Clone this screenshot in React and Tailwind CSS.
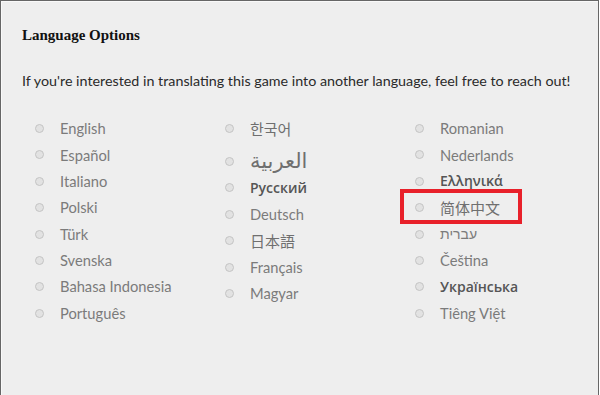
import React from 'react';

const columns = [
  [
    { label: 'English' },
    { label: 'Español' },
    { label: 'Italiano' },
    { label: 'Polski' },
    { label: 'Türk' },
    { label: 'Svenska' },
    { label: 'Bahasa Indonesia' },
    { label: 'Português' },
  ],
  [
    { label: '한국어', kind: 'cjk' },
    { label: 'العربية', kind: 'arabic' },
    { label: 'Русский', kind: 'bold' },
    { label: 'Deutsch' },
    { label: '日本語', kind: 'cjk' },
    { label: 'Français' },
    { label: 'Magyar' },
  ],
  [
    { label: 'Romanian' },
    { label: 'Nederlands' },
    { label: 'Ελληνικά', kind: 'bold' },
    { label: '简体中文', kind: 'cjk', marked: true },
    { label: 'עברית', kind: 'hebrew' },
    { label: 'Čeština' },
    { label: 'Українська', kind: 'bold' },
    { label: 'Tiêng Việt' },
  ],
];

const textClass = {
  latin: "font-['Lato',sans-serif] text-[14.7px] text-[#7b7b7b]",
  cjk: "font-['Noto_Sans_CJK_SC','Noto_Sans_CJK_KR',sans-serif] text-[15px] text-[#6f6f6f]",
  arabic: "font-['DejaVu_Sans',sans-serif] text-[21px] text-[#6f6f6f]",
  bold: "font-['Open_Sans',sans-serif] font-semibold text-[14px] text-[#555]",
  hebrew: "font-['DejaVu_Sans',sans-serif] font-light text-[14px] text-[#7b7b7b]",
};

function Radio(){
  return <span className="w-[9px] h-[9px] rounded-full border border-[#c4c4c4] bg-[#e2e2e2] shrink-0" />;
}

function Item({ item }){
  const tall = item.kind === 'arabic';
  return (
    <li className={`relative flex items-center ${tall ? 'h-[33px] pt-[6.6px]' : 'h-[26.4px]'}`}>
      <span className="w-[30px] flex justify-center"><Radio /></span>
      <span className={`ml-[6px] leading-none ${textClass[item.kind || 'latin']}`}>{item.label}</span>
      {item.marked && (
        <span className="absolute left-[-4px] top-[-5px] w-[122px] h-[35px] border-4 border-[#e8202a]" />
      )}
    </li>
  );
}

export default function App(){
  return (
    <div className="w-[599px] h-[395px] bg-[#eeeeee] border-l border-t border-r border-[#666] shadow-[inset_1px_1px_0_#f9f9f9] overflow-hidden">
      <div className="pl-[21px] pt-[27px]">
        <h2 className="font-['Liberation_Serif',serif] font-bold text-[15px] text-[#111] leading-none">Language Options</h2>
        <p className="mt-[31px] font-['Lato',sans-serif] text-[14.3px] text-[#2a2a2a] leading-none">
          If you're interested in translating this game into another language, feel free to reach out!
        </p>
      </div>
      <div className="mt-[27px] ml-[23px] grid grid-cols-[190px_190px_190px]">
        {columns.map((col, i) => (
          <ul key={i} className="flex flex-col">
            {col.map(item => <Item key={item.label} item={item} />)}
          </ul>
        ))}
      </div>
    </div>
  );
}
